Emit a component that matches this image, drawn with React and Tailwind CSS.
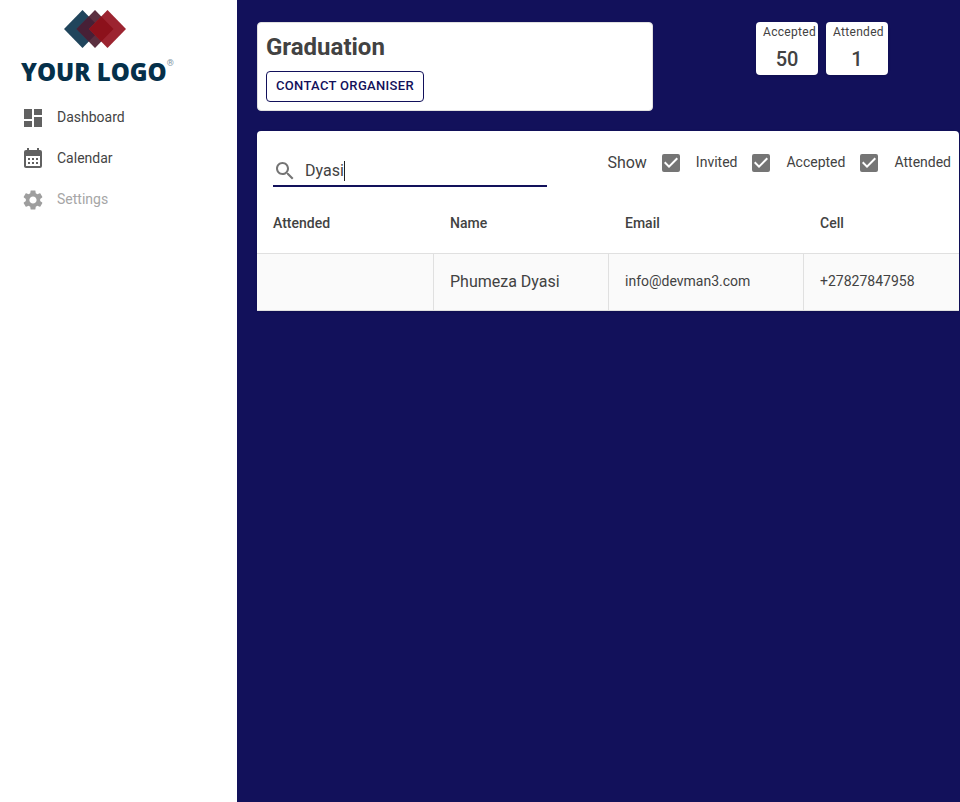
import React, { useState } from 'react';

const NAV_ITEMS = [
  {
    label: 'Dashboard',
    path: 'M3 13h8V3H3v10zm0 8h8v-6H3v6zm10 0h8V11h-8v10zm0-18v6h8V3h-8z',
  },
  {
    label: 'Calendar',
    path: 'M9,11V13H7V11H9M13,11V13H11V11H13M17,11V13H15V11H17M19,3A2,2 0 0,1 21,5V19A2,2 0 0,1 19,21H5C3.89,21 3,20.1 3,19V5A2,2 0 0,1 5,3H6V1H8V3H16V1H18V3H19M19,19V9H5V19H19M9,15V17H7V15H9M13,15V17H11V15H13M17,15V17H15V15H17Z',
  },
  {
    label: 'Settings',
    disabled: true,
    path: 'M19.14 12.94c.04-.3.06-.61.06-.94 0-.32-.02-.64-.07-.94l2.03-1.58c.18-.14.23-.41.12-.61l-1.92-3.32c-.12-.22-.37-.29-.59-.22l-2.39.96c-.5-.38-1.03-.7-1.62-.94l-.36-2.54c-.04-.24-.24-.41-.48-.41h-3.84c-.24 0-.43.17-.47.41l-.36 2.54c-.59.24-1.13.57-1.62.94l-2.39-.96c-.22-.08-.47 0-.59.22L2.74 8.87c-.12.21-.08.47.12.61l2.03 1.58c-.05.3-.09.63-.09.94s.02.64.07.94l-2.03 1.58c-.18.14-.23.41-.12.61l1.92 3.32c.12.22.37.29.59.22l2.39-.96c.5.38 1.03.7 1.62.94l.36 2.54c.05.24.24.41.48.41h3.84c.24 0 .44-.17.47-.41l.36-2.54c.59-.24 1.13-.56 1.62-.94l2.39.96c.22.08.47 0 .59-.22l1.92-3.32c.12-.22.07-.47-.12-.61l-2.01-1.58zM12 15.6c-1.98 0-3.6-1.62-3.6-3.6s1.62-3.6 3.6-3.6 3.6 1.62 3.6 3.6-1.62 3.6-3.6 3.6z',
  },
];

const GUESTS = [
  { attended: '', name: 'Phumeza Dyasi', email: 'info@devman3.com', cell: '+27827847958' },
];

function Logo() {
  return (
    <div className="w-[154px]">
      <svg className="ml-[42px] block" width="64" height="40" viewBox="0 0 64 40" aria-hidden="true">
        <path d="M19.5 1 38 20 19.5 39 1 20z" fill="#20455c" />
        <path d="M32 1 50.5 20 32 39 13.5 20z" fill="#5b3040" />
        <path d="M25.75 7.420 38 20 25.75 32.580 13.5 20z" fill="#472036" />
        <path d="M44.5 1 63 20 44.5 39 26 20z" fill="#9c2430" />
        <path d="M38.25 7.420 50.5 20 38.25 32.580 26 20z" fill="#8c111b" />
      </svg>
      <div className="mt-2 flex items-start whitespace-nowrap text-[#05304a]">
        <span className="font-['Open_Sans',sans-serif] text-[24px] font-extrabold leading-[30px]">YOUR LOGO</span>
        <span className="text-[9px] leading-[12px] text-[#8295a3]">®</span>
      </div>
    </div>
  );
}

function NavItem({ label, path, disabled }) {
  return (
    <li>
      <button
        type="button"
        disabled={disabled}
        className="flex h-[41px] w-full items-center gap-3 px-[21px] text-left text-sm text-[#444444] disabled:text-[#a6a6a6]"
      >
        <svg width="24" height="24" viewBox="0 0 24 24" fill={disabled ? '#9e9e9e' : '#616161'} aria-hidden="true">
          <path d={path} />
        </svg>
        <span className="pb-0.5">{label}</span>
      </button>
    </li>
  );
}

function Stat({ label, value }) {
  return (
    <div className="h-[53px] min-w-[62px] rounded bg-white text-center shadow">
      <div className="pl-[7px] text-left text-xs leading-5 tracking-wide">{label}</div>
      <div className="pt-1 text-xl font-medium leading-[26px]">{value}</div>
    </div>
  );
}

function ShowFilter({ label }) {
  const [checked, setChecked] = useState(true);
  return (
    <label className="flex items-start gap-4 text-sm leading-4">
      <span className="relative block size-[18px]">
        <input
          type="checkbox"
          checked={checked}
          onChange={(e) => setChecked(e.target.checked)}
          className="peer block size-[18px] appearance-none rounded-[2px] border-2 border-[#757575] checked:bg-[#757575]"
        />
        <svg
          className="pointer-events-none absolute inset-0 hidden peer-checked:block"
          width="18"
          height="18"
          viewBox="3 3 18 18"
          fill="#ffffff"
          aria-hidden="true"
        >
          <path d="M10 17l-5-5 1.410-1.410L10 14.170l7.590-7.590L19 8l-9 9z" />
        </svg>
      </span>
      {label}
    </label>
  );
}

export default function App() {
  const [query, setQuery] = useState('Dyasi');
  const cell = 'h-[57px] border-b border-[#e0e0e0] px-4';
  return (
    <div className="flex min-h-screen bg-[#12115b] font-[Roboto,sans-serif] text-[#424242]">
      <aside className="w-[237px] shrink-0 bg-white">
        <div className="pl-[21px] pt-[9px]">
          <Logo />
        </div>
        <nav className="mt-2.5">
          <ul className="flex flex-col">
            {NAV_ITEMS.map((item) => (
              <NavItem key={item.label} {...item} />
            ))}
          </ul>
        </nav>
      </aside>

      <main className="flex min-w-0 flex-1 flex-col gap-5 pb-5 pl-5 pr-px pt-[22px]">
        <header className="flex items-start">
          <section className="flex-1 rounded border border-[#e0e0e0] bg-white p-2">
            <h1 className="text-2xl font-bold leading-8">Graduation</h1>
            <button
              type="button"
              className="mt-2 h-[31px] rounded border border-[#12115b] px-[9px] pb-0.5 text-[13px] font-medium tracking-wide text-[#12115b]"
            >
              CONTACT ORGANISER
            </button>
          </section>
          <div className="ml-[103px] mr-[71px] flex gap-2">
            <Stat label="Accepted" value="50" />
            <Stat label="Attended" value="1" />
          </div>
        </header>

        <section className="rounded bg-white shadow">
          <div className="flex h-[62px] items-start justify-between pl-4 pr-2">
            <label className="mt-[25px] flex h-[31px] w-[274px] items-center border-b-2 border-[#12115b] pt-px">
              <svg width="24" height="24" viewBox="0 0 24 24" fill="#757575" aria-hidden="true">
                <path d="M15.500 14h-.79l-.28-.27C15.410 12.590 16 11.110 16 9.500 16 5.910 13.090 3 9.500 3S3 5.910 3 9.500 5.910 16 9.500 16c1.610 0 3.090-.59 4.230-1.570l.27.28v.79l5 4.990L20.490 19l-4.990-5zm-6 0C7.010 14 5 11.990 5 9.500S7.010 5 9.500 5 14 7.010 14 9.500 11.990 14 9.500 14z" />
              </svg>
              <span className="relative ml-2 flex-1">
                <input
                  type="text"
                  aria-label="Search"
                  value={query}
                  onChange={(e) => setQuery(e.target.value)}
                  className="block h-6 w-full bg-transparent text-base caret-transparent outline-none"
                />
                <span className="pointer-events-none absolute left-0 top-0.5 flex h-5 border-r border-[#212121]" aria-hidden="true">
                  <span className="invisible whitespace-pre text-base leading-5">{query}</span>
                </span>
              </span>
            </label>
            <div className="mt-5 flex h-6 items-center gap-[15px]">
              <span className="text-base">Show</span>
              <ShowFilter label="Invited" />
              <ShowFilter label="Accepted" />
              <ShowFilter label="Attended" />
            </div>
          </div>

          <table className="w-full table-fixed border-separate border-spacing-0 text-left text-sm">
            <thead>
              <tr>
                <th className="h-[61px] w-[177px] border-b border-[#e0e0e0] px-4 font-medium">Attended</th>
                <th className="w-[175px] border-b border-[#e0e0e0] px-4 font-medium">Name</th>
                <th className="w-[195px] border-b border-[#e0e0e0] px-4 font-medium">Email</th>
                <th className="border-b border-[#e0e0e0] px-4 font-medium">Cell</th>
              </tr>
            </thead>
            <tbody className="bg-[#fafafa]">
              {GUESTS.map((guest) => (
                <tr key={guest.email}>
                  <td className={`${cell} border-r`}>{guest.attended}</td>
                  <td className={`${cell} border-r text-base`}>{guest.name}</td>
                  <td className={`${cell} border-r pb-0.5`}>{guest.email}</td>
                  <td className={`${cell} pb-0.5`}>{guest.cell}</td>
                </tr>
              ))}
            </tbody>
          </table>
        </section>
      </main>
    </div>
  );
}
